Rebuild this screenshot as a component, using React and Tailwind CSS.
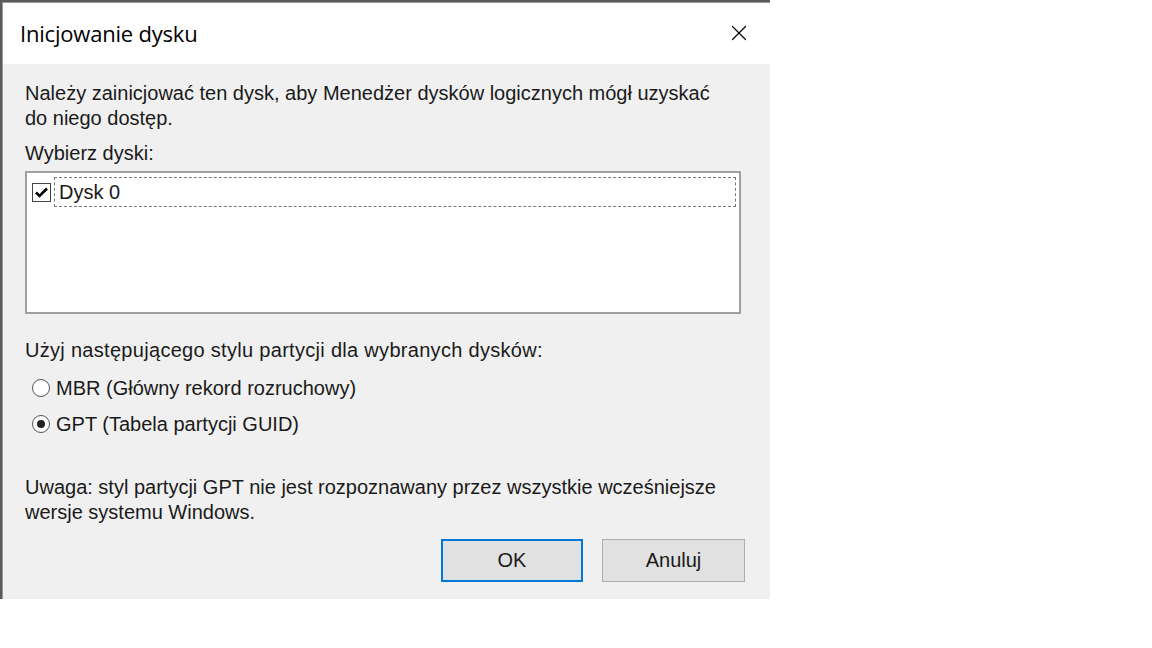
import { X } from "lucide-react";

function Radio({ checked, label }) {
  return (
    <div className="flex items-center h-[36px]">
      <span className="w-[18px] h-[18px] rounded-full border border-[#555] bg-white flex items-center justify-center ml-[7px]">
        {checked && <span className="w-[8px] h-[8px] rounded-full bg-[#222]" />}
      </span>
      <span className="ml-[6px]">{label}</span>
    </div>
  );
}

export default function App() {
  return (
    <div className="w-[1152px] h-[648px] bg-white overflow-hidden">
      {/* window behind dialog, just the edges show */}
      <div className="w-[770px] h-[599px] bg-[#5a5a5a] pt-[2px] pl-[2px]">
        <div className="h-full bg-[#f0f0f0] border-t border-l border-[#9a9a9a] flex flex-col text-[#1a1a1a] font-['Liberation_Sans',Arial,sans-serif] text-[20px]">
          {/* title bar */}
          <div className="h-[61px] bg-white flex items-center justify-between pl-[17px] pr-[18px] shrink-0">
            <span className="font-['Open_Sans',sans-serif] text-[22px] text-black tracking-[-0.2px]">
              Inicjowanie dysku
            </span>
            <X size={26} strokeWidth={1.1} className="text-black -mt-[1px]" />
          </div>

          {/* body */}
          <div className="flex-1 pl-[22px] pt-[17px] flex flex-col leading-[25px]">
            <p>
              Należy zainicjować ten dysk, aby Menedżer dysków logicznych mógł uzyskać
              <br />
              do niego dostęp.
            </p>
            <p className="mt-[10px]">Wybierz dyski:</p>
            <div className="mt-[5px] w-[716px] h-[143px] border-2 border-[#a0a0a0] bg-white p-[2px]">
              <div className="flex items-center h-[30px] mt-[2px]">
                <span className="ml-[3px] w-[19px] h-[19px] border border-[#444] bg-white flex items-center justify-center">
                  <svg width="13" height="11" viewBox="0 0 13 11">
                    <path d="M1 5.5 L4.5 9 L12 1.5" fill="none" stroke="#000" strokeWidth="2.6" />
                  </svg>
                </span>
                <div className="ml-[3px] mr-[1px] flex-1 h-full border border-dashed border-[#777] flex items-center pl-[4px]">
                  Dysk 0
                </div>
              </div>
            </div>

            <p className="mt-[24px] tracking-[0.3px]">Użyj następującego stylu partycji dla wybranych dysków:</p>
            <div className="mt-[7px]">
              <Radio checked={false} label="MBR (Główny rekord rozruchowy)" />
              <Radio checked label="GPT (Tabela partycji GUID)" />
            </div>

            <p className="mt-[33px]">
              Uwaga: styl partycji GPT nie jest rozpoznawany przez wszystkie wcześniejsze
              <br />
              wersje systemu Windows.
            </p>

            <div className="flex gap-[19px] mt-[14px] ml-[416px]">
              <button className="w-[142px] h-[43px] bg-[#e1e1e1] border-2 border-[#0078d7] text-[20px]">
                OK
              </button>
              <button className="w-[143px] h-[43px] bg-[#e1e1e1] border border-[#adadad] text-[20px]">
                Anuluj
              </button>
            </div>
          </div>
        </div>
      </div>
    </div>
  );
}
